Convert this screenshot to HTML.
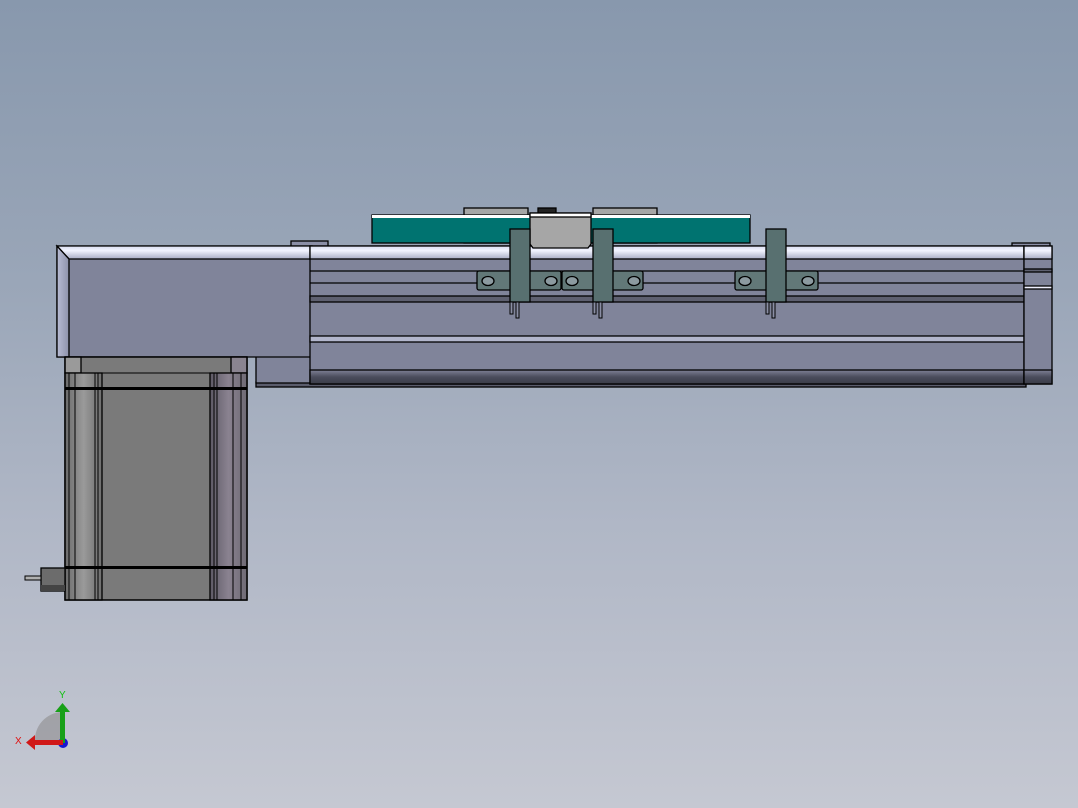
<!DOCTYPE html>
<html><head><style>
html,body{margin:0;padding:0;width:1078px;height:808px;overflow:hidden}
body{background:linear-gradient(#8898ad 0%,#9aa6b8 35%,#b0b7c6 65%,#c5c8d2 100%)}
svg{position:absolute;left:0;top:0}
</style></head><body>
<svg width="1078" height="808" viewBox="0 0 1078 808" xmlns="http://www.w3.org/2000/svg">
<defs>
<linearGradient id="top" x1="0" y1="0" x2="0" y2="1"><stop offset="0" stop-color="#d8dcf0"/><stop offset=".35" stop-color="#f2f4ff"/><stop offset="1" stop-color="#a8acc4"/></linearGradient>
<linearGradient id="bot" x1="0" y1="0" x2="0" y2="1"><stop offset="0" stop-color="#7e8096"/><stop offset=".5" stop-color="#4a4c5c"/><stop offset="1" stop-color="#3a3c48"/></linearGradient>
<linearGradient id="lb" x1="0" y1="0" x2="1" y2="0"><stop offset="0" stop-color="#b8bcd4"/><stop offset="1" stop-color="#8e92aa"/></linearGradient>
<linearGradient id="col" x1="0" y1="0" x2="1" y2="0"><stop offset="0" stop-color="#6a6a6a"/><stop offset=".5" stop-color="#9a9a9a"/><stop offset="1" stop-color="#6e6e6e"/></linearGradient>
<linearGradient id="colr" x1="0" y1="0" x2="1" y2="0"><stop offset="0" stop-color="#5e5a66"/><stop offset=".5" stop-color="#8a8290"/><stop offset="1" stop-color="#6e6a74"/></linearGradient>
</defs>
<g stroke="#000" stroke-width="1.3">
<!-- tabs on top -->
<rect x="291" y="241" width="37" height="6" fill="#8a8ea6"/>
<rect x="1012" y="243" width="38" height="5" fill="#8a8ea6"/>
<!-- bottom plate -->
<rect x="256" y="382" width="770" height="5" fill="#5a5c6c"/>
<!-- lower step -->
<rect x="256" y="350" width="60" height="33" fill="#80849a"/>
<!-- left block -->
<path d="M57 246 H312 V357 H57 Z" fill="#80849a"/>
<path d="M57 246 H312 V259 H69 Z" fill="url(#top)"/>
<path d="M57 246 L69 259 V357 H57 Z" fill="url(#lb)"/>
<!-- rail -->
<rect x="310" y="246" width="714" height="138" fill="#80849a"/>
<rect x="310" y="246" width="714" height="13" fill="url(#top)"/>
<rect x="310" y="370" width="714" height="14" fill="url(#bot)"/>
<line x1="310" y1="271" x2="1024" y2="271"/>
<line x1="310" y1="283" x2="1024" y2="283"/>
<rect x="310" y="296" width="714" height="6" fill="#5e6070"/>
<rect x="310" y="336" width="714" height="6" fill="#b2b6cc"/>
<!-- end cap -->
<rect x="1024" y="246" width="28" height="138" fill="#80849a"/>
<rect x="1024" y="246" width="28" height="13" fill="url(#top)"/>
<rect x="1024" y="370" width="28" height="14" fill="url(#bot)"/>
<rect x="1024" y="269" width="28" height="3" fill="#5e6070"/>
<rect x="1024" y="286" width="28" height="3" fill="#eef0ff"/>
<!-- carriage back blocks -->
<rect x="464" y="208" width="64" height="35" fill="#a6a6a6"/>
<rect x="593" y="208" width="64" height="35" fill="#a6a6a6"/>
<rect x="538" y="208" width="18" height="6" fill="#222"/>
<rect x="372" y="215" width="378" height="28" fill="#007370"/>
<rect x="372" y="215" width="378" height="3" fill="#fff" stroke="none"/>
<path d="M530 213 H591 V244 L588 248 H533 L530 244 Z" fill="#a6a6a6"/>
<rect x="530" y="213" width="61" height="4" fill="#fff"/>
<!-- sensor rails -->
<g fill="#627878">
<rect x="477" y="271" width="84" height="19" rx="2"/>
<rect x="562" y="271" width="81" height="19" rx="2"/>
<rect x="735" y="271" width="83" height="19" rx="2"/>
</g>
<g fill="#8c9aa0">
<ellipse cx="488" cy="281" rx="6" ry="4.5"/><ellipse cx="551" cy="281" rx="6" ry="4.5"/>
<ellipse cx="572" cy="281" rx="6" ry="4.5"/><ellipse cx="634" cy="281" rx="6" ry="4.5"/>
<ellipse cx="745" cy="281" rx="6" ry="4.5"/><ellipse cx="808" cy="281" rx="6" ry="4.5"/>
</g>
<!-- sensors -->
<g fill="#587070">
<rect x="510" y="229" width="20" height="73"/>
<rect x="593" y="229" width="20" height="73"/>
<rect x="766" y="229" width="20" height="73"/>
</g>
<g fill="#8a8ea4" stroke-width="1">
<rect x="510" y="302" width="3" height="12"/><rect x="516" y="302" width="3" height="16"/>
<rect x="593" y="302" width="3" height="12"/><rect x="599" y="302" width="3" height="16"/>
<rect x="766" y="302" width="3" height="12"/><rect x="772" y="302" width="3" height="16"/>
</g>
<!-- motor -->
<rect x="65" y="357" width="182" height="243" fill="#7a7a7a"/>
<rect x="65" y="357" width="16" height="16" fill="#9a9a9a"/>
<rect x="231" y="357" width="16" height="16" fill="#8a8490"/>
<rect x="65" y="373" width="37" height="227" fill="url(#col)"/>
<rect x="210" y="373" width="37" height="227" fill="url(#colr)"/>
<g fill="none" stroke-width="1">
<line x1="69" y1="373" x2="69" y2="600"/><line x1="75" y1="373" x2="75" y2="600"/>
<line x1="95" y1="373" x2="95" y2="600"/><line x1="98" y1="373" x2="98" y2="600"/>
<line x1="214" y1="373" x2="214" y2="600"/><line x1="217" y1="373" x2="217" y2="600"/>
<line x1="233" y1="373" x2="233" y2="600"/><line x1="241" y1="373" x2="241" y2="600"/>
<line x1="65" y1="373" x2="247" y2="373"/>
</g>
<rect x="65" y="387" width="182" height="3" fill="#000" stroke="none"/>
<rect x="65" y="566" width="182" height="3" fill="#000" stroke="none"/>
<line x1="65" y1="568" x2="247" y2="568"/>
<rect x="65" y="357" width="182" height="243" fill="none"/>
<!-- shaft -->
<rect x="41" y="568" width="24" height="23" fill="#6c6c6c"/>
<rect x="41" y="585" width="24" height="6" fill="#444" stroke="none"/>
<rect x="25" y="576" width="16" height="4" fill="#b0b0b0" stroke-width="1"/>
</g>
<!-- triad -->
<path d="M62 712 A28 28 0 0 0 35 742 L62 742 Z" fill="#9a9a9e" opacity=".8"/>
<circle cx="63" cy="743" r="5" fill="#1616d0"/>
<rect x="60" y="711" width="5" height="32" fill="#18a018"/>
<path d="M55 712 L62.5 703 L70 712 Z" fill="#18a018"/>
<rect x="35" y="740" width="28" height="5" fill="#d01818"/>
<path d="M35 735 L26 742.5 L35 750 Z" fill="#d01818"/>
<text x="59" y="698" font-family="Liberation Sans,sans-serif" font-size="10" fill="#10c010">Y</text>
<text x="15" y="744" font-family="Liberation Sans,sans-serif" font-size="10" fill="#e01010">X</text>
</svg>
</body></html>
